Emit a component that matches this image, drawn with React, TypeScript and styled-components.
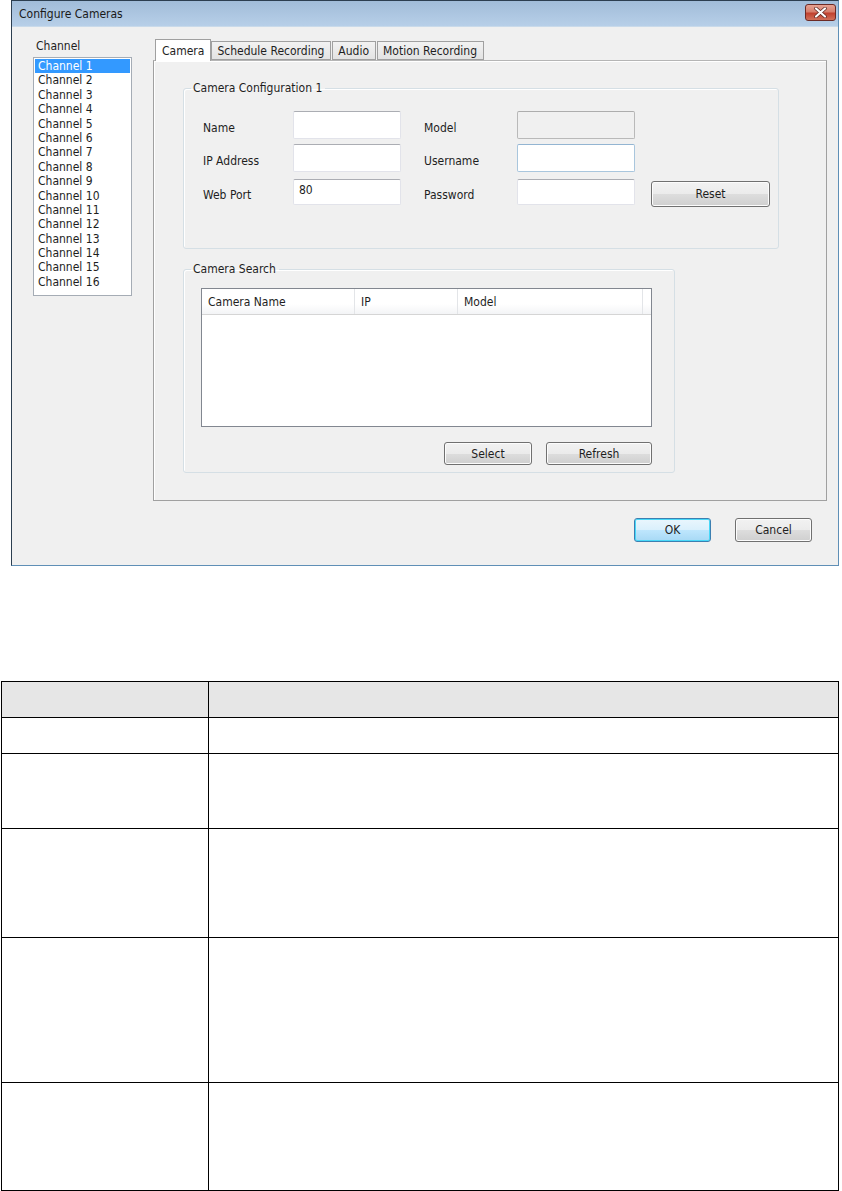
import React from 'react'
import styled, { createGlobalStyle } from 'styled-components'

const GlobalStyle = createGlobalStyle`
  html, body {
    margin: 0;
    padding: 0;
    background: #ffffff;
  }
  body {
    font-family: "DejaVu Sans Condensed", "Liberation Sans", Arial, sans-serif;
    font-size: 12px;
    color: #1e1e1e;
  }
`

const Page = styled.div`
  width: 842px;
  display: flex;
  flex-direction: column;
`

const Window = styled.div`
  margin-left: 11px;
  width: 828px;
  height: 566px;
  border: 1px solid #2c3e50;
  border-bottom-color: #5f8fb6;
  border-right-color: #5f8fb6;
  background: #f0f0f0;
  display: flex;
  flex-direction: column;
  box-sizing: border-box;
`

const TitleBar = styled.div`
  height: 25px;
  flex: none;
  display: flex;
  align-items: center;
  justify-content: space-between;
  padding: 0 2px 0 7px;
  background: linear-gradient(#a1bcd9, #b7cfe8);
  border-bottom: 1px solid #c9daea;
`

const TitleText = styled.span`
  color: #1a1a1a;
  font-size: 12px;
  margin-top: 1px;
`

const CloseButton = styled.div`
  width: 31px;
  height: 17px;
  margin-top: -3px;
  border: 1px solid #6c2a25;
  border-radius: 3px;
  box-sizing: border-box;
  background: linear-gradient(#e6a293 0%, #d67f6d 45%, #c1412f 55%, #d0705a 100%);
  display: flex;
  align-items: center;
  justify-content: center;
`

const Body = styled.div`
  flex: 1;
  display: flex;
  flex-direction: column;
  padding: 12px 0 0 21px;
`

const Main = styled.div`
  display: flex;
`

const ChannelColumn = styled.div`
  width: 99px;
  display: flex;
  flex-direction: column;
`

const FieldLabel = styled.div`
  height: 18px;
  line-height: 14px;
  padding-left: 3px;
`

const ChannelList = styled.ul`
  margin: 0;
  padding: 1px 1px 2px;
  list-style: none;
  height: 239px;
  box-sizing: border-box;
  border: 1px solid #a5acb5;
  background: #ffffff;
`

const ChannelItem = styled.li<{ $active?: boolean }>`
  height: 14.4px;
  line-height: 14.4px;
  padding-left: 3px;
  color: ${p => (p.$active ? '#ffffff' : '#1e1e1e')};
  background: ${p => (p.$active ? '#3399ff' : 'transparent')};
`

const TabColumn = styled.div`
  margin-left: 21px;
  width: 674px;
  display: flex;
  flex-direction: column;
`

const TabStrip = styled.div`
  display: flex;
  align-items: flex-end;
  height: 21px;
  padding-left: 2px;
`

const Tab = styled.div<{ $active?: boolean }>`
  height: ${p => (p.$active ? '22px' : '19px')};
  margin-bottom: ${p => (p.$active ? '-1px' : '0')};
  padding: 0 6px 0 ${p => (p.$active ? '6px' : '5px')};
  display: flex;
  align-items: center;
  box-sizing: border-box;
  border: 1px solid #a0a0a0;
  border-bottom: ${p => (p.$active ? 'none' : '1px solid #a0a0a0')};
  margin-right: ${p => (p.$active ? '0' : '1px')};
  background: ${p => (p.$active ? '#ffffff' : 'linear-gradient(#f2f2f2, #e3e3e3)')};
  position: relative;
  z-index: ${p => (p.$active ? 1 : 0)};
  padding-top: ${p => (p.$active ? '0' : '1px')};
`

const TabPanel = styled.div`
  height: 441px;
  box-sizing: border-box;
  border: 1px solid #a0a0a0;
  background: #f0f0f0;
  border-top-color: #b5b5b5;
  box-shadow: inset 1px 1px 0 #ffffff;
  padding: 20px 0 0 29px;
  display: flex;
  flex-direction: column;
`

const Group = styled.fieldset<{ $width: number; $height: number }>`
  margin: 0;
  width: ${p => p.$width}px;
  height: ${p => p.$height}px;
  box-sizing: border-box;
  border: 1px solid #d5dfe5;
  border-radius: 3px;
  box-shadow: inset 1px 1px 0 #ffffff;
  padding: 0;
  min-width: 0;
`

const Legend = styled.legend`
  margin-left: 7px;
  padding: 0 3px 0 2px;
  line-height: 14px;
`

const ConfigGrid = styled.div`
  display: grid;
  grid-template-columns: 90px 108px 23px 93px 118px 16px 119px;
  grid-template-rows: 28px 28px 28px;
  row-gap: 5px;
  padding: 16px 0 0 19px;
  & > :nth-child(n + 15) {
    margin-top: 2px;
  }
`

const RowLabel = styled.div`
  display: flex;
  align-items: center;
  padding-top: 6px;
  box-sizing: border-box;
`

const TextBox = styled.div<{ $disabled?: boolean; $focused?: boolean }>`
  box-sizing: border-box;
  border: 1px solid
    ${p => (p.$focused ? '#a9c6dd' : p.$disabled ? '#b9b9b9' : '#e2e3ea')};
  border-top-color: ${p => (p.$focused ? '#93b5d2' : p.$disabled ? '#adadad' : '#abadb3')};
  border-radius: 2px;
  background: ${p => (p.$disabled ? '#f0f0f0' : '#ffffff')};
  padding: 3px 5px;
  line-height: 14px;
`

const Spacer = styled.div``

const Button = styled.div<{ $width: number; $height: number; $default?: boolean }>`
  width: ${p => p.$width}px;
  height: ${p => p.$height}px;
  box-sizing: border-box;
  border: 1px solid ${p => (p.$default ? '#3c7fb1' : '#707070')};
  border-radius: 3px;
  background: ${p =>
    p.$default
      ? 'linear-gradient(#eaf6fd 0%, #d9f0fc 50%, #bee6fd 51%, #a7d9f5 100%)'
      : 'linear-gradient(#f2f2f2 0%, #ebebeb 50%, #dddddd 51%, #cfcfcf 100%)'};
  box-shadow: inset 0 0 0 1px ${p => (p.$default ? '#48d8f8' : '#fcfcfc')};
  display: flex;
  align-items: center;
  justify-content: center;
  line-height: 14px;
`

const ResetButton = styled(Button)`
  align-self: end;
  margin-bottom: -2px;
`

const SearchGroup = styled(Group)`
  margin-top: 13px;
`

const ListView = styled.div`
  margin: 12px 0 0 17px;
  width: 451px;
  height: 139px;
  box-sizing: border-box;
  border: 1px solid #828790;
  background: #ffffff;
`

const ListHeader = styled.div`
  display: grid;
  grid-template-columns: 153px 103px 185px 1fr;
  height: 25px;
  background: linear-gradient(#ffffff 0%, #ffffff 60%, #f3f4f6 100%);
  border-bottom: 1px solid #d5d5d5;
`

const HeaderCell = styled.div`
  display: flex;
  align-items: center;
  padding-left: 6px;
  border-right: 1px solid #e3e5e8;
`

const SearchButtons = styled.div`
  display: flex;
  gap: 14px;
  margin: 15px 0 0 260px;
`

const Footer = styled.div`
  display: flex;
  justify-content: flex-end;
  gap: 24px;
  margin: 17px 26px 0 0;
`

const DocTable = styled.table`
  margin: 115px 0 0 1px;
  width: 838px;
  border-collapse: collapse;
  table-layout: fixed;
`

const HeadCell = styled.th`
  height: 35px;
  border: 1.5px solid #000000;
  background: #e6e6e6;
  padding: 0;
`

const Cell = styled.td<{ $height: number }>`
  height: ${p => p.$height}px;
  border: 1.5px solid #000000;
  padding: 0;
`

const channels = Array.from({ length: 16 }, (_, i) => `Channel ${i + 1}`)
const tabs = ['Camera', 'Schedule Recording', 'Audio', 'Motion Recording']
const rowHeights = [35, 74, 108, 144, 107]

const CloseGlyph = () => (
  <svg width="13" height="11" viewBox="0 0 13 11">
    <path
      d="M2 1.5 L11 9.5 M11 1.5 L2 9.5"
      stroke="#5a2520"
      strokeWidth="3.6"
      strokeLinecap="round"
    />
    <path
      d="M2 1.5 L11 9.5 M11 1.5 L2 9.5"
      stroke="#ffffff"
      strokeWidth="2.2"
      strokeLinecap="round"
    />
  </svg>
)

const App: React.FunctionComponent = () => (
  <Page>
    <GlobalStyle />
    <Window>
      <TitleBar>
        <TitleText>Configure Cameras</TitleText>
        <CloseButton>
          <CloseGlyph />
        </CloseButton>
      </TitleBar>
      <Body>
        <Main>
          <ChannelColumn>
            <FieldLabel>Channel</FieldLabel>
            <ChannelList>
              {channels.map((c, i) => (
                <ChannelItem key={c} $active={i === 0}>
                  {c}
                </ChannelItem>
              ))}
            </ChannelList>
          </ChannelColumn>
          <TabColumn>
            <TabStrip>
              {tabs.map((t, i) => (
                <Tab key={t} $active={i === 0}>
                  {t}
                </Tab>
              ))}
            </TabStrip>
            <TabPanel>
              <Group $width={596} $height={168}>
                <Legend>Camera Configuration 1</Legend>
                <ConfigGrid>
                  <RowLabel>Name</RowLabel>
                  <TextBox />
                  <Spacer />
                  <RowLabel>Model</RowLabel>
                  <TextBox $disabled />
                  <Spacer />
                  <Spacer />
                  <RowLabel>IP Address</RowLabel>
                  <TextBox />
                  <Spacer />
                  <RowLabel>Username</RowLabel>
                  <TextBox $focused />
                  <Spacer />
                  <Spacer />
                  <RowLabel>Web Port</RowLabel>
                  <TextBox>80</TextBox>
                  <Spacer />
                  <RowLabel>Password</RowLabel>
                  <TextBox />
                  <Spacer />
                  <ResetButton $width={119} $height={26}>
                    Reset
                  </ResetButton>
                </ConfigGrid>
              </Group>
              <SearchGroup $width={492} $height={211}>
                <Legend>Camera Search</Legend>
                <ListView>
                  <ListHeader>
                    <HeaderCell>Camera Name</HeaderCell>
                    <HeaderCell>IP</HeaderCell>
                    <HeaderCell>Model</HeaderCell>
                    <Spacer />
                  </ListHeader>
                </ListView>
                <SearchButtons>
                  <Button $width={88} $height={23}>
                    Select
                  </Button>
                  <Button $width={106} $height={23}>
                    Refresh
                  </Button>
                </SearchButtons>
              </SearchGroup>
            </TabPanel>
          </TabColumn>
        </Main>
        <Footer>
          <Button $width={77} $height={24} $default>
            OK
          </Button>
          <Button $width={77} $height={24}>
            Cancel
          </Button>
        </Footer>
      </Body>
    </Window>
    <DocTable>
      <colgroup>
        <col style={{ width: 207 }} />
        <col />
      </colgroup>
      <thead>
        <tr>
          <HeadCell />
          <HeadCell />
        </tr>
      </thead>
      <tbody>
        {rowHeights.map((h, i) => (
          <tr key={i}>
            <Cell $height={h} />
            <Cell $height={h} />
          </tr>
        ))}
      </tbody>
    </DocTable>
  </Page>
)

export default App
